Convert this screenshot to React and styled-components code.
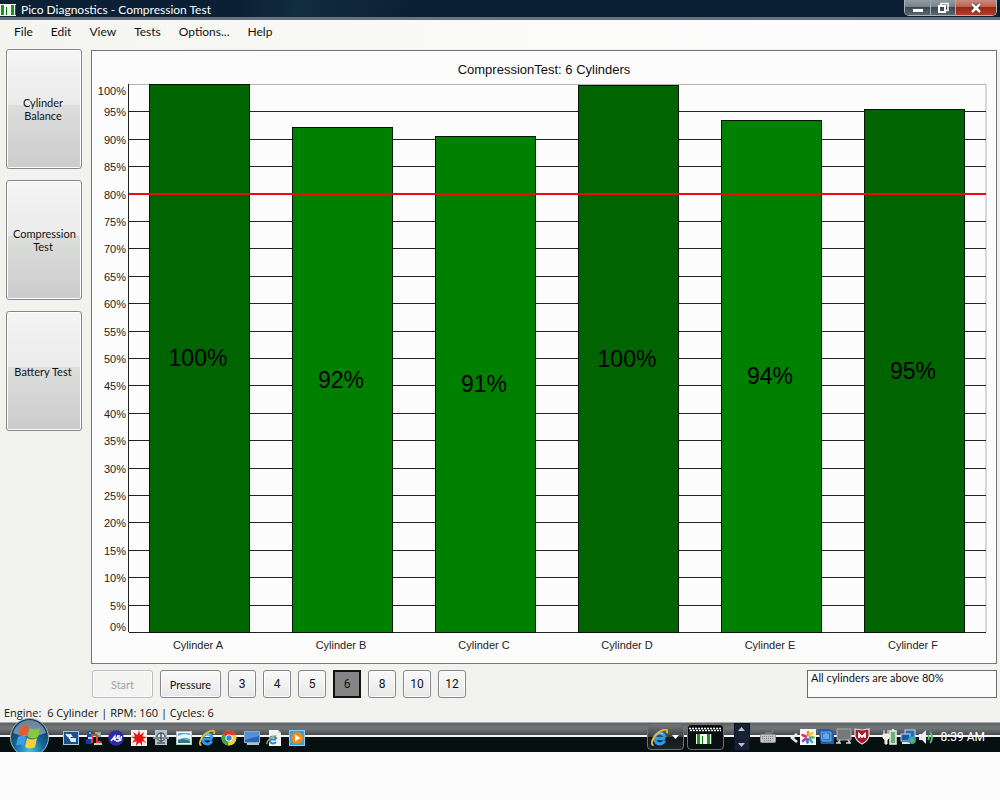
import { useState } from 'react';
import styled, { createGlobalStyle, css } from 'styled-components';

const GlobalStyle = createGlobalStyle`
  *, *::before, *::after {
    box-sizing: border-box;
  }

  body {
    margin: 0;
    background: #fcfcfc;
    color: #111;
    font-family: Lato, 'Open Sans', sans-serif;
    font-size: 12px;
  }

  button, textarea {
    font: inherit;
    color: inherit;
    margin: 0;
    padding: 0;
  }
`;

const Window = styled.div`
  background: #f2f2ee;
`;

const TitleBar = styled.header`
  display: flex;
  align-items: flex-start;
  height: 20px;
  padding-right: 3px;
  background: linear-gradient(100deg, #0c2036 0%, #0b2035 24%, #122c40 30%, #0b1f34 42%, #0a1e33 100%);
  border-bottom: 3px solid #68727e;
  color: #fff;
`;

const AppIcon = styled.svg`
  width: 16px;
  height: 12px;
  margin-top: 4px;
  flex: none;
`;

const Title = styled.h1`
  flex: 1;
  margin: 0 0 0 5px;
  font-size: 12px;
  line-height: 19px;
  font-weight: 400;
`;

const WindowControls = styled.div`
  display: flex;
  height: 16px;
  border: 1px solid #aab2ba;
  border-top: 0;
  border-radius: 0 0 5px 5px;
  overflow: hidden;
`;

const ControlButton = styled.button`
  display: flex;
  align-items: center;
  justify-content: center;
  width: ${({ $close }) => ($close ? '41px' : '25px')};
  border: 0;
  border-left: ${({ $first }) => ($first ? '0' : '1px solid #a3abb3')};
  background: ${({ $close }) =>
    $close
      ? 'linear-gradient(#c98b80 0%, #bd6250 45%, #9e2410 50%, #b53c28 100%)'
      : 'linear-gradient(#9299a1 0%, #78818a 45%, #3c4753 50%, #5c6873 100%)'};
`;

const MenuBar = styled.nav`
  display: flex;
  gap: 18px;
  padding: 2px 14px 8px;
  background: linear-gradient(90deg, #f4f4f1 0%, #f9f9f7 40%, #fcfcfc 75%);
`;

const MenuItem = styled.button`
  border: 0;
  background: none;
  line-height: 19px;
`;

const Workspace = styled.div`
  display: flex;
  align-items: flex-start;
  gap: 9px;
  padding: 0 3px 0 6px;
`;

const Sidebar = styled.aside`
  display: flex;
  flex-direction: column;
  gap: 11px;
  width: 76px;
  flex: none;
`;

const raised = css`
  border: 1px solid #85878b;
  border-radius: 3px;
  box-shadow: inset 0 0 0 1px #fcfcfc;
`;

const TestButton = styled.button`
  ${raised}
  height: 120px;
  padding: 0 8px 0 6px;
  background: linear-gradient(#f4f4f4 0%, #ebebeb 46%, #dcdedc 47%, #cbcbcb 100%);
  font-size: 11px;
  line-height: 13px;
`;

const Main = styled.main`
  flex: 1;
  min-width: 0;
  padding-top: 1px;
`;

const ChartPanel = styled.section`
  border: 1px solid #747679;
  background: #fcfcfc;
`;

const Chart = styled.svg`
  display: block;
  width: 100%;
  height: auto;
  font-family: 'Liberation Sans', sans-serif;
  font-size: 11px;
`;

const Toolbar = styled.div`
  display: flex;
  align-items: flex-start;
  gap: 7px;
  padding: 6px 0 6px 1px;
`;

const ToolButton = styled.button`
  ${raised}
  width: ${({ $wide }) => ($wide ? '61px' : '28px')};
  height: 28px;
  background: linear-gradient(#f8f8f8 0%, #f2f2f2 50%, #e6e6e6 100%);
  font-family: ${({ $wide }) => ($wide ? 'Lato' : 'Roboto')}, sans-serif;
  font-size: ${({ $wide }) => ($wide ? '11px' : '12px')};

  &:disabled {
    border-color: #bcbec2;
    color: #a2a2a2;
    background: #f3f3f1;
  }

  &[aria-pressed='true'] {
    border: 2px solid #111;
    border-radius: 0;
    box-shadow: none;
    background: #858585;
  }
`;

const Result = styled.textarea`
  width: 190px;
  height: 28px;
  margin-left: auto;
  padding: 0 3px;
  border: 1px solid #6b6d70;
  border-radius: 0;
  background: #fcfcfc;
  font-size: 11px;
  line-height: 13px;
  resize: none;
  overflow: hidden;
`;

const StatusBar = styled.footer`
  padding: 0 4px;
  font-family: 'Open Sans', sans-serif;
  font-size: 11px;
  line-height: 18px;
  white-space: pre;
`;

const Taskbar = styled.nav`
  display: flex;
  align-items: center;
  height: 30px;
  padding: 0 15px 0 10px;
  background: linear-gradient(
    #a6abad 0 1px,
    #5c6163 1px,
    #737779 6px,
    #484c4e 13px,
    #f4f4f4 13px 15px,
    #071010 15px
  );
  color: #fff;
`;

const StartButton = styled.button`
  width: 40px;
  height: 30px;
  border: 0;
  background: none;

  svg {
    display: block;
    width: 40px;
    height: 34px;
    margin-top: -4px;
  }
`;

const QuickLaunch = styled.div`
  display: flex;
  justify-content: space-between;
  width: 242px;
  margin: 0 auto 0 13px;
`;

const IconButton = styled.button`
  width: 16px;
  height: 18px;
  border: 0;
  background: none;

  svg {
    display: block;
    width: 16px;
    height: 16px;
    margin: 1px auto 0;
    overflow: visible;
  }
`;

const TaskButton = styled.button`
  display: flex;
  align-items: center;
  justify-content: center;
  gap: 4px;
  width: 37px;
  height: 26px;
  margin-right: 3px;
  border: 1px solid #6d7173;
  border-radius: 4px;
  background: ${({ $active }) =>
    $active ? '#0a1011' : 'linear-gradient(#707476 0%, #3e4344 48%, #101818 52%, #1c2526 100%)'};
`;

const Scroller = styled.div`
  display: flex;
  flex-direction: column;
  justify-content: space-between;
  width: 16px;
  height: 28px;
  margin: 0 10px 0 7px;
  padding: 3px 0;
  background: #172136;
  border: 1px solid #0a1222;
`;

const ScrollButton = styled.button`
  display: flex;
  justify-content: center;
  border: 0;
  background: none;
`;

const Tray = styled.div`
  display: flex;
  align-items: center;
  gap: 2px;
  margin-left: 4px;
`;

const TrayGroup = styled(Tray)`
  margin-left: 12px;
`;

const ChevronButton = styled(IconButton)`
  width: 10px;
  margin-left: 10px;
`;

const Clock = styled.time`
  margin-left: 7px;
  font-family: Roboto, sans-serif;
  line-height: 26px;
`;

const cylinders = [
  { name: 'Cylinder A', value: 100, label: '100%', dark: true },
  { name: 'Cylinder B', value: 92.1, label: '92%' },
  { name: 'Cylinder C', value: 90.5, label: '91%' },
  { name: 'Cylinder D', value: 99.8, label: '100%', dark: true },
  { name: 'Cylinder E', value: 93.5, label: '94%' },
  { name: 'Cylinder F', value: 95.4, label: '95%', dark: true },
];

const ticks = Array.from({ length: 21 }, (_, i) => i * 5);

const PLOT = { left: 37, right: 894, top: 33, bottom: 581 };
const yOf = (value) => Math.round(PLOT.bottom - ((PLOT.bottom - PLOT.top) * value) / 100);

const tickLabelY = (value) => {
  if (value === 100) return yOf(100) + 11;
  if (value === 0) return yOf(0) - 1;
  return yOf(value) + 5;
};

const CompressionChart = () => (
  <Chart viewBox="0 0 904 612" role="img" aria-label="Compression by cylinder">
    <text x="452" y="23" textAnchor="middle" fontSize="13" fill="#111">
      CompressionTest: 6 Cylinders
    </text>
    <path d={`M${PLOT.left} ${PLOT.top}.5H${PLOT.right}V${PLOT.bottom}`} fill="none" stroke="#b4b4b0" />
    {ticks.map((tick) => (
      <g key={tick}>
        {tick < 100 && (
          <path d={`M${PLOT.left} ${yOf(tick)}.5H${PLOT.right}`} stroke="#222" strokeWidth="1" />
        )}
        <text x="34" y={tickLabelY(tick)} textAnchor="end" fill="#222">
          {tick}%
        </text>
      </g>
    ))}
    <path d={`M${PLOT.left - 0.5} ${PLOT.top}V${PLOT.bottom}`} stroke="#222" />
    {cylinders.map((c, i) => {
      const x = 57 + i * 143;
      return (
        <rect
          key={c.name}
          x={x + 0.5}
          y={yOf(c.value) + 0.5}
          width="100"
          height={PLOT.bottom - yOf(c.value)}
          fill={c.dark ? '#006400' : '#008000'}
          stroke="#051505"
        />
      );
    })}
    <path d={`M${PLOT.left} 143H${PLOT.right}`} stroke="#f20a0a" strokeWidth="2" />
    {cylinders.map((c, i) => (
      <g key={c.name} textAnchor="middle">
        <text x={106 + i * 143} y={(yOf(c.value) + PLOT.bottom) / 2 + 8} fontSize="23" fill="#000">
          {c.label}
        </text>
        <text x={106 + i * 143} y="598" fill="#222">
          {c.name}
        </text>
      </g>
    ))}
  </Chart>
);

const BarsIcon = () => (
  <AppIcon viewBox="0 0 16 12" aria-hidden="true">
    <rect width="16" height="12" fill="#f4f8f2" />
    <path d="M1 1h3v10H1zM11 1h3v10h-3z" fill="#17981b" />
    <path d="M6 3h1v8H6zM15 1h1v10h-1z" fill="#0b6b10" />
  </AppIcon>
);

const StartOrb = () => (
  <svg viewBox="0 0 40 34" aria-hidden="true">
    <defs>
      <radialGradient id="orb" cx="50%" cy="85%" r="75%">
        <stop offset="0" stopColor="#35c3e8" />
        <stop offset="0.5" stopColor="#176a9e" />
        <stop offset="1" stopColor="#13304b" />
      </radialGradient>
    </defs>
    <circle cx="19.5" cy="19.5" r="19" fill="url(#orb)" stroke="#9fb6c4" />
    <path d="M3 15a17 17 0 0 1 33 0q-16 7-33 0z" fill="#c7dce8" opacity="0.5" />
    <path d="M11 9q5-3 8 0l-2 9q-4-3-8 0z" fill="#ec5a25" />
    <path d="M20 10q5 3 10 0l-2 9q-5 3-10 0z" fill="#8cc63e" />
    <path d="M8 19q5-3 8 0l-2 9q-4-3-8 0z" fill="#3f9fe4" />
    <path d="M17 20q5 3 10 0l-2 9q-5 3-10 0z" fill="#fcd13a" />
  </svg>
);

const Ie = ({ size = 16 }) => (
  <svg viewBox="0 0 16 16" width={size} height={size} aria-hidden="true">
    <path
      d="M13.4 9H4.8M12.8 11.2A5 5 0 1 1 13.2 8"
      fill="none"
      stroke="#2a9df0"
      strokeWidth="3"
    />
    <path d="M5 5.5a5 5 0 0 1 6.5-.6" fill="none" stroke="#8ed8ff" strokeWidth="1" />
    <path d="M2.5 15.2C-2 15 3 4.5 10 1.5 14-.2 16.5.5 14.8 4" fill="none" stroke="#f3b52c" strokeWidth="1.8" />
  </svg>
);

const quickIcons = {
  'Show desktop': (
    <>
      <rect x="0.5" y="1.5" width="15" height="13" fill="#1c4f8d" stroke="#a9c8e4" />
      <path d="M3 4h5l2 3H5zM6 8h7v4H8z" fill="#dcecfa" />
      <path d="M3 4l5 5" stroke="#fff" strokeWidth="1.5" />
    </>
  ),
  'Network tool': (
    <>
      <rect x="1" y="1" width="6" height="6" fill="#2448c8" />
      <rect x="9" y="2" width="6" height="5" fill="#8fa3a8" />
      <path d="M0 9h6v5H0z" fill="#1738b5" />
      <path d="M6 13V5h5v7h4" fill="none" stroke="#e33b2d" strokeWidth="2" />
      <path d="M8 14h8M2 8h4" stroke="#b7d9d1" strokeWidth="2" />
      <path d="M3 3h2M11 4h3" stroke="#7be08c" strokeWidth="1.5" />
    </>
  ),
  'Scan tool': (
    <>
      <circle cx="8" cy="8" r="7.8" fill="#2b2ca5" />
      <path d="M3 11l4-5v5M5 9h3M12 6H9.500L9 8h2.500l-.5 3H8M13.500 6l-1 5" fill="none" stroke="#fff" strokeWidth="1.3" />
    </>
  ),
  'Splat': (
    <>
      <rect width="16" height="16" fill="#f8eeee" />
      <path d="M8 0l1.200 5L13 2l-1.500 4.500L16 7l-4 2 3 4-4-2v5l-2.500-4L5 16l.5-5L1 13l3-4-4-2 4-.5L2 2l4.500 3z" fill="#e8120e" />
    </>
  ),
  'Vehicle interface': (
    <>
      <rect x="2" y="0" width="12" height="15" fill="#b4c3ce" />
      <circle cx="8" cy="7" r="4" fill="#e5ebef" stroke="#4c575f" strokeWidth="1.5" />
      <path d="M0 8h16" stroke="#7f8a91" strokeWidth="2" />
      <path d="M8 3v9M4 13h8" stroke="#4c575f" strokeWidth="1.5" />
    </>
  ),
  'Pictures': (
    <>
      <rect x="0.5" y="1.5" width="15" height="13" fill="#f7fafa" stroke="#b9c3c4" />
      <rect x="2" y="3" width="12" height="10" fill="#58b4dc" />
      <path d="M2 6q5-3 12-1v4q-6-3-12 1z" fill="#e8f6fa" />
      <path d="M2 10l5-1 7 2v2H2z" fill="#2e7b7b" />
    </>
  ),
  'Internet Explorer': 'ie',
  'Chrome': (
    <>
      <circle cx="8" cy="8" r="7.5" fill="#f7cd2e" />
      <path d="M8 8L1.500 4.200A7.500 7.500 0 0 1 14.800 5H8z" fill="#e2382c" />
      <path d="M8 8l-1 7.400A7.500 7.500 0 0 1 1.500 4.200z" fill="#37a84b" />
      <circle cx="8" cy="8" r="3.6" fill="#fff" />
      <circle cx="8" cy="8" r="2.7" fill="#3c86d8" />
    </>
  ),
  'Remote desktop': (
    <>
      <rect x="0.5" y="1.5" width="15" height="11" fill="#2866b8" stroke="#93a9c2" />
      <path d="M1 2h14v4L1 10z" fill="#5590d6" />
      <path d="M3 14h12" stroke="#b7c0c8" strokeWidth="2" />
    </>
  ),
  'Web page': (
    <>
      <path d="M3 0h9l3 3v13H3z" fill="#f4f4f1" />
      <path d="M12 0v3h3" fill="#cfd3d4" />
      <path d="M10 9.500H4M10 12A3.500 3.500 0 1 1 10.500 9" fill="none" stroke="#2287d8" strokeWidth="2" />
      <path d="M1 14C0 12 5 6 11 5" fill="none" stroke="#f0b12b" strokeWidth="1.2" />
    </>
  ),
  'Media player': (
    <>
      <rect x="0.5" y="0.5" width="15" height="15" fill="#38a1dc" stroke="#8ccdf0" />
      <circle cx="8" cy="8" r="6" fill="#f48a17" />
      <path d="M6 4.500l5.500 3.500L6 11.500z" fill="#fff" />
    </>
  ),
};

const trayIcons = {
  'Photo gallery': (
    <>
      <rect y="-1" width="16" height="16" fill="#fbf4f4" />
      <g strokeWidth="2.5" strokeLinecap="round">
        <path d="M8 5V2" stroke="#f28a2c" />
        <path d="M9.500 5.500l3-2.500" stroke="#f5cb2e" />
        <path d="M10 7.500h3.500" stroke="#58b947" />
        <path d="M9.500 9l2.500 3" stroke="#2fa7ce" />
        <path d="M7.500 9.500v3" stroke="#3b62cf" />
        <path d="M6 8.500L3 11" stroke="#9d3fae" />
        <path d="M6 6.500L2.500 5" stroke="#e33267" />
      </g>
    </>
  ),
  'Display settings': (
    <>
      <path d="M0-1h12l4 3v12H3z" fill="#1f5fae" />
      <path d="M3 2h10v9H4z" fill="#2c7acb" stroke="#7cb6e8" strokeWidth="0.8" />
      <path d="M6 4v5M8 3v6M10 4v5" stroke="#a5d0f2" />
    </>
  ),
  'Docking station': (
    <>
      <path d="M1-1h14v11H1z" fill="#76797a" stroke="#aaa9a5" />
      <path d="M0 13h5M10 13h5M4 10l-2 3M12 10l2 3" stroke="#d2d3d2" strokeWidth="1.5" />
    </>
  ),
  'Security center': (
    <>
      <path d="M1-1l7 1 7-1v7q-1 5-7 8-6-3-7-8z" fill="#a5172c" stroke="#e8dede" strokeWidth="1.2" />
      <path d="M5 8V4l3 3 3-3v4" fill="none" stroke="#fff" strokeWidth="1.8" />
    </>
  ),
};

const trayStatusIcons = {
  'Power': (
    <>
      <rect x="8" y="1" width="6" height="13" fill="#6dae7c" stroke="#e6efe4" strokeWidth="1.5" />
      <rect x="10" y="-1" width="2" height="2" fill="#e6efe4" />
      <path d="M1 4h6v4l-2 2v4H3v-4L1 8zM2 0v4M6 0v4" fill="#f3efdc" stroke="#f3efdc" />
    </>
  ),
  'Network': (
    <>
      <rect x="5" y="0" width="10" height="8" fill="#276bbb" stroke="#c8dbe7" />
      <rect x="1" y="4" width="9" height="7" fill="#1b58a5" stroke="#c8dbe7" />
      <path d="M2 13h8" stroke="#dfe7eb" strokeWidth="2" />
      <circle cx="12" cy="10" r="4" fill="#2c8fe0" />
      <path d="M9 9l3-2 3 3-3 4z" fill="#54bb45" />
    </>
  ),
  'Volume': (
    <>
      <path d="M1 4h3l4-4v14l-4-4H1z" fill="#edf0ef" />
      <path d="M10 5q2 2.500 0 5M12 2q4 5.500 0 11" fill="none" stroke="#58bd76" strokeWidth="1.8" />
    </>
  ),
};

const renderIcons = (icons) =>
  Object.entries(icons).map(([name, art]) => (
    <IconButton key={name} aria-label={name}>
      {art === 'ie' ? <Ie /> : <svg viewBox="0 0 16 16">{art}</svg>}
    </IconButton>
  ));

const menus = ['File', 'Edit', 'View', 'Tests', 'Options...', 'Help'];
const tests = ['Cylinder Balance', 'Compression Test', 'Battery Test'];
const counts = [3, 4, 5, 6, 8, 10, 12];

const App = () => {
  const [count, setCount] = useState(6);

  return (
    <>
      <GlobalStyle />
      <Window>
        <TitleBar>
          <BarsIcon />
          <Title>Pico Diagnostics - Compression Test</Title>
          <WindowControls>
            <ControlButton $first aria-label="Minimize">
              <svg width="12" height="12" viewBox="0 0 12 12">
                <rect x="0.5" y="6.5" width="11" height="4" fill="#fff" stroke="#4c555e" />
              </svg>
            </ControlButton>
            <ControlButton aria-label="Restore">
              <svg width="12" height="12" viewBox="0 0 12 12" fill="none">
                <path d="M4 3V1.500h7v7H9" stroke="#fff" strokeWidth="1.5" />
                <rect x="2" y="4" width="6" height="6" stroke="#fff" strokeWidth="2" />
              </svg>
            </ControlButton>
            <ControlButton $close aria-label="Close">
              <svg width="12" height="12" viewBox="0 0 12 12">
                <path d="M2 2l8 8M10 2l-8 8" stroke="#5b2a25" strokeWidth="4" />
                <path d="M2 2l8 8M10 2l-8 8" stroke="#fff" strokeWidth="2.5" />
              </svg>
            </ControlButton>
          </WindowControls>
        </TitleBar>

        <MenuBar>
          {menus.map((menu) => (
            <MenuItem key={menu}>{menu}</MenuItem>
          ))}
        </MenuBar>

        <Workspace>
          <Sidebar>
            {tests.map((test) => (
              <TestButton key={test}>{test}</TestButton>
            ))}
          </Sidebar>
          <Main>
            <ChartPanel>
              <CompressionChart />
            </ChartPanel>
            <Toolbar>
              <ToolButton $wide disabled>
                Start
              </ToolButton>
              <ToolButton $wide>Pressure</ToolButton>
              {counts.map((n) => (
                <ToolButton key={n} aria-pressed={n === count} onClick={() => setCount(n)}>
                  {n}
                </ToolButton>
              ))}
              <Result readOnly aria-label="Result" defaultValue="All cylinders are above 80%" />
            </Toolbar>
          </Main>
        </Workspace>
        <StatusBar>{'Engine:  6 Cylinder | RPM: 160 | Cycles: 6'}</StatusBar>
      </Window>

      <Taskbar>
        <StartButton aria-label="Start menu">
          <StartOrb />
        </StartButton>
        <QuickLaunch>{renderIcons(quickIcons)}</QuickLaunch>
        <TaskButton aria-label="Internet Explorer windows">
          <Ie size={17} />
          <svg width="7" height="4" viewBox="0 0 7 4">
            <path d="M0 0h7L3.500 4z" fill="#fff" />
          </svg>
        </TaskButton>
        <TaskButton $active aria-label="Pico Diagnostics">
          <svg width="32" height="20" viewBox="0 0 32 20">
            <path d="M0 1.500h32M1 3.500h31" stroke="#f4f4f4" strokeWidth="1.5" strokeDasharray="2 1" />
            <rect x="7" y="7" width="16" height="10" fill="#f2f7f0" />
            <path d="M8 7h3v10H8zM18 7h3v10h-3z" fill="#17981b" />
            <path d="M13 9h1v8h-1zM22 7h1v10h-1z" fill="#0b6b10" />
          </svg>
        </TaskButton>
        <Scroller>
          <ScrollButton aria-label="Scroll up">
            <svg width="7" height="4" viewBox="0 0 7 4">
              <path d="M0 4h7L3.500 0z" fill="#bfc2c6" />
            </svg>
          </ScrollButton>
          <ScrollButton aria-label="Scroll down">
            <svg width="7" height="4" viewBox="0 0 7 4">
              <path d="M0 0h7L3.500 4z" fill="#bfc2c6" />
            </svg>
          </ScrollButton>
        </Scroller>
        <IconButton aria-label="Keyboard">
          <svg viewBox="0 0 16 16">
            <path d="M5 5q0-3 4-2t4-3" fill="none" stroke="#8e9496" />
            <rect x="0.5" y="4.5" width="15" height="8" rx="1" fill="#c3c6c4" stroke="#8e9291" />
            <path d="M2 6.500h12M2 8.500h12M4 10.500h8" stroke="#7d8280" strokeDasharray="1 1" />
          </svg>
        </IconButton>
        <ChevronButton aria-label="Show hidden icons">
          <svg viewBox="0 0 16 16">
            <path d="M11 4L6 8l5 4" fill="none" stroke="#e8eaeb" strokeWidth="2.5" />
          </svg>
        </ChevronButton>
        <Tray>{renderIcons(trayIcons)}</Tray>
        <TrayGroup>{renderIcons(trayStatusIcons)}</TrayGroup>
        <Clock>8:39 AM</Clock>
      </Taskbar>
    </>
  );
};

export default App;
